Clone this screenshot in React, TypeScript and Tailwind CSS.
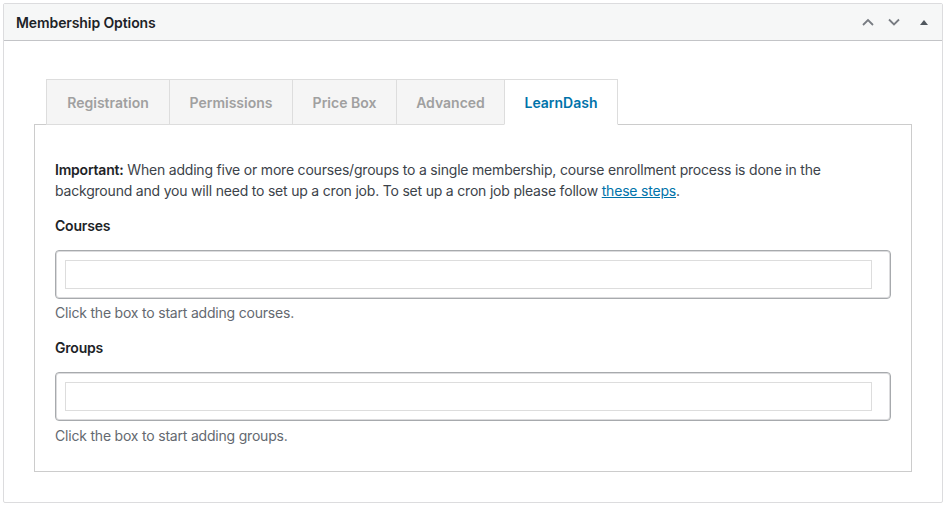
export default function App() {
  const tabs = [
    { label: 'Registration', w: 'w-[123px]' },
    { label: 'Permissions', w: 'w-[123px]' },
    { label: 'Price Box', w: 'w-[104px]' },
    { label: 'Advanced', w: 'w-[108px]' },
  ]

  return (
    <div className="w-[950px] h-[510px] bg-white p-[3px] pr-[7px] pb-[7px] text-[14px] text-[#3c434a]" style={{ fontFamily: 'Inter, "Noto Sans", sans-serif' }}>
      <div className="border border-[#dcdcde] rounded-[2px] bg-white h-full flex flex-col">
        {/* header */}
        <div className="h-[37px] flex items-center justify-between pl-[12px] pr-[12px] bg-[#f6f7f7] border-b border-[#c3c4c7]">
          <h2 className="font-semibold text-[14px] text-[#1d2327] tracking-[-0.1px]">Membership Options</h2>
          <div className="flex items-center text-[#787c82]">
            <svg width="14" height="14" viewBox="0 0 14 14" className="mr-[12px]">
              <path d="M2 10 L7 5 L12 10" fill="none" stroke="currentColor" strokeWidth="1.8" />
            </svg>
            <svg width="14" height="14" viewBox="0 0 14 14" className="mr-[18px]">
              <path d="M2 4.5 L7 9.5 L12 4.5" fill="none" stroke="currentColor" strokeWidth="1.8" />
            </svg>
            <svg width="10" height="10" viewBox="0 0 10 10" className="mr-[1px]">
              <path d="M1 8 L5 3 L9 8 Z" fill="#50575e" />
            </svg>
          </div>
        </div>

        {/* body */}
        <div className="px-[30px] pt-[38px]">
          <div className="flex pl-[12px] relative z-10">
            {tabs.map((t) => (
              <div
                key={t.label}
                className={`${t.w} h-[46px] -mb-px flex items-center justify-center bg-[#f5f5f5] border border-[#dddddd] border-r-0 font-semibold text-[#a0a0a0]`}
              >
                {t.label}
              </div>
            ))}
            <div className="w-[114px] h-[46px] -mb-px flex items-center justify-center bg-white border border-[#dddddd] border-b-white font-semibold text-[#0073aa]">
              LearnDash
            </div>
          </div>

          <div className="border border-[#cccccc] px-[20px] pt-[34px] pb-[25px] tracking-[-0.2px]">
            <p className="leading-[21px]">
              <strong className="font-semibold text-[#1d2327]">Important:</strong> When adding five or more courses/groups to a single membership, course enrollment process is done in the background and you will need to set up a cron job. To set up a cron job please follow{' '}
              <a href="#" className="text-[#0073aa] underline">these steps</a>.
            </p>

            <div className="mt-[14px] font-semibold text-[#1d2327] leading-[21px]">Courses</div>
            <div className="mt-[14px] h-[49px] border border-[#a7aaad] rounded-[4px] shadow-[inset_0_0_0_1px_#dcdcde] p-[9px] pr-[18px]">
              <div className="h-full border border-[#dddddd]"></div>
            </div>
            <div className="mt-[4px] text-[#646970] leading-[20px]">Click the box to start adding courses.</div>

            <div className="mt-[14px] font-semibold text-[#1d2327] leading-[21px]">Groups</div>
            <div className="mt-[14px] h-[49px] border border-[#a7aaad] rounded-[4px] shadow-[inset_0_0_0_1px_#dcdcde] p-[9px] pr-[18px]">
              <div className="h-full border border-[#dddddd]"></div>
            </div>
            <div className="mt-[5px] text-[#646970] leading-[20px]">Click the box to start adding groups.</div>
          </div>
        </div>
      </div>
    </div>
  )
}
